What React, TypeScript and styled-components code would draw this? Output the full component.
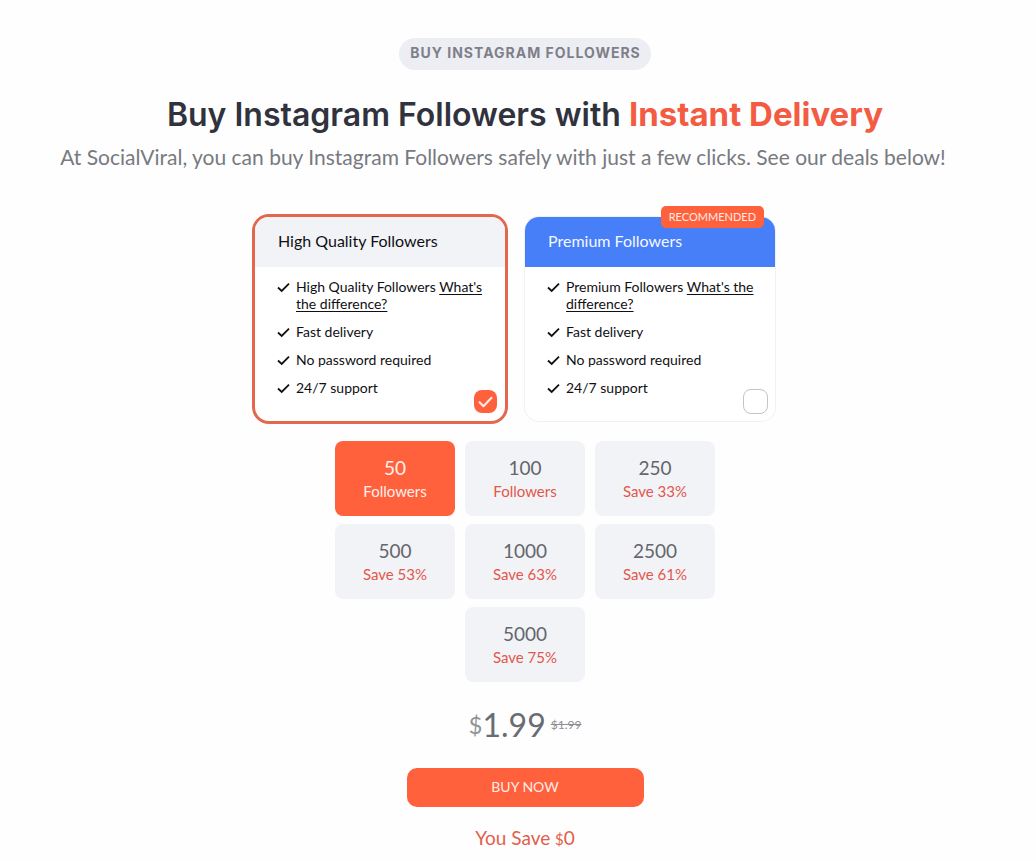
import React, { useState } from "react";
import styled, { createGlobalStyle } from "styled-components";

const GlobalStyle = createGlobalStyle`
  *, *::before, *::after { box-sizing: border-box; }
  body {
    margin: 0;
    background: #fefefe;
    color: #101014;
    font-family: Lato, "Liberation Sans", sans-serif;
  }
  h1, h2, p, ul { margin: 0; padding: 0; }
  button { font-family: inherit; cursor: pointer; }
`;

const Page = styled.main`
  display: flex;
  flex-direction: column;
  align-items: center;
  padding: 38px 0 12px 14px;
`;

const Eyebrow = styled.p`
  padding: 0 10px 2px 11px;
  border-radius: 16px;
  background: #ededf4;
  color: #7e7f88;
  font: 700 14px/30px Inter, sans-serif;
  letter-spacing: 1px;
`;

const Title = styled.h1`
  margin-top: 22px;
  color: #30323d;
  font: 600 32px/44px Inter, sans-serif;
  text-align: center;
`;

const Accent = styled.span`
  color: #f45b43;
  font-size: 33px;
  font-weight: 700;
`;

const Lead = styled.p`
  margin-top: 6px;
  padding-right: 44px;
  color: #777a80;
  font-size: 21px;
  line-height: 28px;
  text-align: center;
`;

const Tiers = styled.div`
  display: flex;
  flex-wrap: wrap;
  justify-content: center;
  gap: 20px;
  margin-top: 46px;
  padding-right: 20px;
`;

const Card = styled.section<{ $selected: boolean }>`
  position: relative;
  width: 250px;
  padding-bottom: 25px;
  border-radius: 14px;
  background: #fff;
  box-shadow: 0 0 0 ${(p) => (p.$selected ? "3px #e3674d" : "1px #f1f1f3")};
`;

const CardTitle = styled.label<{ $premium: boolean }>`
  display: block;
  padding: 0 0 2px 23px;
  border-radius: 14px 14px 0 0;
  background: ${(p) => (p.$premium ? "#467ff7" : "#f2f3f7")};
  color: ${(p) => (p.$premium ? "#f4f7ff" : "#101014")};
  font-size: 16px;
  line-height: 48px;
`;

const Ribbon = styled.span`
  position: absolute;
  top: -11px;
  right: 11px;
  padding: 0 8px;
  border-radius: 5px;
  background: #ff613c;
  color: #ffece7;
  font-size: 11px;
  line-height: 22px;
`;

const Features = styled.ul`
  display: flex;
  flex-direction: column;
  gap: 11px;
  padding: 11px 16px 0 22px;
  list-style: none;
  font-size: 14px;
  line-height: 17px;
`;

const Feature = styled.li`
  display: flex;
  gap: 6px;
`;

const Tick = styled.svg`
  flex: none;
  width: 13px;
  height: 17px;
`;

const TextLink = styled.a`
  color: inherit;
  text-underline-offset: 2px;
`;

const Choice = styled.span`
  position: absolute;
  right: 7px;
  bottom: 7px;
  display: grid;
  width: 25px;
  height: 25px;
  place-items: center;

  > * { grid-area: 1 / 1; }
`;

const ChoiceInput = styled.input`
  width: 25px;
  height: 25px;
  margin: 0;
  border: 1px solid #c4c4c8;
  border-radius: 8px;
  background: #fff;
  appearance: none;
  cursor: pointer;

  &:checked {
    width: 23px;
    height: 23px;
    border: 0;
    background: #ff613c;
  }
`;

const ChoiceTick = styled.svg`
  width: 15px;
  height: 12px;
  pointer-events: none;
`;

const Packages = styled.div`
  display: flex;
  flex-wrap: wrap;
  justify-content: center;
  gap: 8px 10px;
  max-width: 380px;
  margin-top: 20px;
`;

const PackageButton = styled.button<{ $active: boolean }>`
  display: flex;
  flex-direction: column;
  align-items: center;
  width: 120px;
  padding: 15px 0 14px;
  border: 0;
  border-radius: 8px;
  background: ${(p) => (p.$active ? "#ff613c" : "#f2f3f7")};
  color: ${(p) => (p.$active ? "#fff0ec" : "#64666c")};
  font-size: 19px;
  line-height: 24px;
`;

const PackageNote = styled.span<{ $active: boolean }>`
  color: ${(p) => (p.$active ? "#fff0ec" : "#e2574c")};
  font-size: 15px;
  line-height: 22px;
`;

const PriceRow = styled.p`
  display: flex;
  align-items: center;
  margin-top: 22px;
  color: #696c73;
  line-height: 42px;
`;

const Currency = styled.span`
  color: #92949a;
  font-size: 24px;
`;

const Amount = styled.span`
  font-size: 32px;
`;

const OldPrice = styled.s`
  margin-left: 5px;
  color: #8c8e93;
  font-size: 12px;
`;

const BuyButton = styled.button`
  width: 237px;
  margin-top: 22px;
  padding: 0 0 1px;
  border: 0;
  border-radius: 10px;
  background: #ff613c;
  color: #ffece7;
  font-size: 14px;
  line-height: 38px;
`;

const Saving = styled.p`
  margin-top: 19px;
  color: #e2604b;
  font-size: 19px;
  line-height: 24px;
`;

const SmallSign = styled.span`
  font-size: 15px;
`;

const tiers = [
  { id: "high", name: "High Quality Followers", premium: false },
  { id: "premium", name: "Premium Followers", premium: true },
];

const perks = ["Fast delivery", "No password required", "24/7 support"];

const packages = [
  { count: 50, note: "Followers" },
  { count: 100, note: "Followers" },
  { count: 250, note: "Save 33%" },
  { count: 500, note: "Save 53%" },
  { count: 1000, note: "Save 63%" },
  { count: 2500, note: "Save 61%" },
  { count: 5000, note: "Save 75%" },
];

const FeatureTick = () => (
  <Tick viewBox="0 0 13 17" fill="none" aria-hidden="true">
    <path d="M1 9.5 4.7 13 12 5.7" stroke="#101014" strokeWidth="1.8" />
  </Tick>
);

export default function App() {
  const [tier, setTier] = useState("high");
  const [count, setCount] = useState(50);

  return (
    <>
      <GlobalStyle />
      <Page>
        <Eyebrow>BUY INSTAGRAM FOLLOWERS</Eyebrow>
        <Title>
          Buy Instagram Followers with <Accent>Instant Delivery</Accent>
        </Title>
        <Lead>
          At SocialViral, you can buy Instagram Followers safely with just a few clicks. See our
          deals below!
        </Lead>
        <Tiers>
          {tiers.map((t) => (
            <Card key={t.id} $selected={tier === t.id}>
              <CardTitle htmlFor={t.id} $premium={t.premium}>
                {t.name}
              </CardTitle>
              {t.premium && <Ribbon>RECOMMENDED</Ribbon>}
              <Features>
                <Feature>
                  <FeatureTick />
                  <span>
                    {t.name} <TextLink href="#difference">What's the difference?</TextLink>
                  </span>
                </Feature>
                {perks.map((perk) => (
                  <Feature key={perk}>
                    <FeatureTick />
                    <span>{perk}</span>
                  </Feature>
                ))}
              </Features>
              <Choice>
                <ChoiceInput
                  type="radio"
                  name="tier"
                  id={t.id}
                  checked={tier === t.id}
                  onChange={() => setTier(t.id)}
                />
                {tier === t.id && (
                  <ChoiceTick viewBox="0 0 15 12" fill="none" aria-hidden="true">
                    <path
                      d="m1.5 6.2 4 4 8-8.4"
                      stroke="#fff0ec"
                      strokeWidth="2"
                      strokeLinecap="round"
                      strokeLinejoin="round"
                    />
                  </ChoiceTick>
                )}
              </Choice>
            </Card>
          ))}
        </Tiers>
        <Packages>
          {packages.map((p) => (
            <PackageButton
              key={p.count}
              type="button"
              aria-pressed={count === p.count}
              $active={count === p.count}
              onClick={() => setCount(p.count)}
            >
              {p.count}
              <PackageNote $active={count === p.count}>{p.note}</PackageNote>
            </PackageButton>
          ))}
        </Packages>
        <PriceRow>
          <Currency>$</Currency>
          <Amount>1.99</Amount>
          <OldPrice>$1.99</OldPrice>
        </PriceRow>
        <BuyButton type="button">BUY NOW</BuyButton>
        <Saving>
          You Save <SmallSign>$</SmallSign>0
        </Saving>
      </Page>
    </>
  );
}
